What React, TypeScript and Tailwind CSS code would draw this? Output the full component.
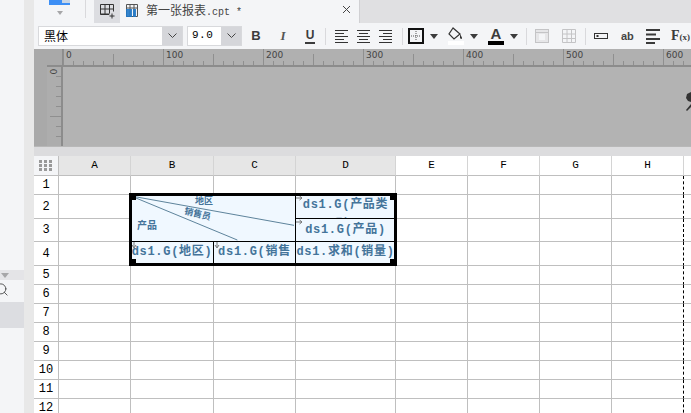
import { Search } from 'lucide-react';

const mono = { fontFamily: '"Liberation Mono", "Noto Sans CJK SC", monospace' };
const gridLine = 'border-r border-b border-[#bfbfbf]';
const cellText = 'text-[12px] font-bold text-[#44749a] tracking-[0.7px] leading-[20px] text-center overflow-hidden [line-break:anywhere]';

function Caret({ className = '' }: { className?: string }) {
    return (
        <svg width="8" height="5" viewBox="0 0 8 5" className={className}>
            <path d="M0 0h8L4 5z" fill="#3c3c3c" />
        </svg>
    );
}

function Divider() {
    return <div className="w-px h-[17px] bg-[#d9d9dc]" />;
}

function Lines({ mode }: { mode: 'left' | 'center' | 'right' }) {
    const short = mode === 'left' ? 'M1 4.5h9M1 10.5h9' : mode === 'right' ? 'M5 4.5h9M5 10.5h9' : 'M3 4.5h9M3 10.5h9';
    return (
        <svg width="15" height="14" viewBox="0 0 15 14" stroke="#333" strokeWidth="1">
            <path d={`M1 1.5h13M1 7.5h13M1 13.5h13 ${short}`} fill="none" />
        </svg>
    );
}

function Arrow({ down = false }: { down?: boolean }) {
    return (
        <svg width="7" height="7" viewBox="0 0 7 7" className="absolute left-0 top-0" fill="none" stroke="#777" strokeWidth="1">
            {down ? <path d="M3 0v5M1 3l2 3 2-3" /> : <path d="M0 3h6M3.5 1L6 3 3.5 5" />}
        </svg>
    );
}

function Ruler() {
    return (
        <div className="h-[97px] shrink-0 bg-[#a9a9a9] flex flex-col relative overflow-hidden">
            <div className="flex h-[16px] shrink-0">
                <div className="w-[29px] shrink-0 border-r border-[#8c8c8c]" />
                <div className="flex-1 flex bg-[#b0b0b0]">
                    {[0, 100, 200, 300, 400, 500, 600].map((n) => (
                        <div key={n} className="w-[100px] shrink-0 relative border-l border-[#8f8f8f] flex items-end">
                            <span className="absolute left-[2px] top-0 text-[9px] leading-[13px] text-[#444]" style={{ fontFamily: '"DejaVu Sans", sans-serif' }}>{n}</span>
                            {[...Array(9)].map((_, i) => (
                                <div key={i} className={`w-[10px] shrink-0 border-r border-[#8f8f8f] ${i === 4 ? 'h-[11px]' : 'h-[4px]'}`} />
                            ))}
                        </div>
                    ))}
                </div>
            </div>
            <div className="h-[2px] bg-[#8c8c8c] ml-[13px] shrink-0" />
            <div className="flex-1 flex">
                <div className="w-[13px] shrink-0" />
                <div className="w-[16px] shrink-0 bg-[#adadad] border-r-2 border-[#8c8c8c] flex flex-col items-end relative">
                    <span className="absolute left-[3px] top-[-1px] text-[9px] leading-[11px] text-[#444] rotate-90" style={{ fontFamily: '"DejaVu Sans", sans-serif' }}>0</span>
                    {[...Array(7)].map((_, i) => (
                        <div key={i} className={`h-[10px] shrink-0 border-b border-[#8f8f8f] ${i === 4 ? 'w-[11px]' : 'w-[5px]'}`} />
                    ))}
                </div>
                <div className="flex-1 bg-[#b3b3b3] flex items-start justify-end">
                    <svg width="5" height="19" viewBox="0 0 5 19" className="mt-[25px]" fill="#333">
                        <path d="M5 0 1 2 0 6l2 3 3 1zM5 12 0 18l1 1 4-4z" />
                    </svg>
                </div>
            </div>
        </div>
    );
}

function Toolbar() {
    return (
        <div className="h-[26px] bg-[#f4f5f7] flex items-center pl-[4px] shrink-0">
            <div className="w-[145px] h-[20px] bg-white border border-[#d8d9dc] flex items-center mb-[1px]">
                <span className="flex-1 pl-[5px] text-[12px] leading-[18px] text-black" style={{ fontFamily: '"Noto Sans CJK SC", sans-serif' }}>黑体</span>
                <div className="w-[20px] h-full bg-[#d5d6da] flex items-center justify-center">
                    <svg width="9" height="5" viewBox="0 0 9 5" fill="none" stroke="#444"><path d="M.5.5l4 4 4-4" /></svg>
                </div>
            </div>
            <div className="w-[55px] h-[20px] bg-white border border-[#d8d9dc] flex items-center ml-[4px] mb-[1px]">
                <span className="flex-1 pl-[4px] text-[11px] text-black tracking-[0.5px]" style={mono}>9.0</span>
                <div className="w-[20px] h-full bg-[#d5d6da] flex items-center justify-center">
                    <svg width="9" height="5" viewBox="0 0 9 5" fill="none" stroke="#444"><path d="M.5.5l4 4 4-4" /></svg>
                </div>
            </div>
            <span className="ml-[9px] w-[10px] text-[13px] font-bold text-[#3c3c3c] text-center" style={{ fontFamily: '"Liberation Sans", sans-serif' }}>B</span>
            <span className="ml-[17px] w-[10px] text-[13px] font-bold italic text-[#555] text-center" style={{ fontFamily: '"Liberation Serif", serif' }}>I</span>
            <span className="ml-[17px] w-[10px] text-[12px] leading-[13px] font-bold text-[#3c3c3c] text-center border-b-2 border-[#3c3c3c]" style={{ fontFamily: '"Liberation Sans", sans-serif' }}>U</span>
            <div className="ml-[10px]"><Divider /></div>
            <div className="ml-[8px]"><Lines mode="left" /></div>
            <div className="ml-[7px]"><Lines mode="center" /></div>
            <div className="ml-[7px]"><Lines mode="right" /></div>
            <div className="ml-[9px]"><Divider /></div>
            <svg width="16" height="16" viewBox="0 0 16 16" className="ml-[5px]" fill="none">
                <rect x="1" y="1" width="14" height="14" stroke="#111" strokeWidth="2" />
                <path d="M8 3v10M3 8h10" stroke="#555" strokeDasharray="1 1" />
            </svg>
            <Caret className="ml-[6px]" />
            <svg width="16" height="18" viewBox="0 0 16 18" className="ml-[10px]" fill="none">
                <path d="M5 1 1 7l5 5 6-5z" stroke="#333" strokeWidth="1.2" />
                <path d="M12 7c1 2 2 3 2 4s-1 1.500-2 0z" fill="#333" />
                <rect x="0" y="14" width="16" height="4" fill="#fff" />
            </svg>
            <Caret className="ml-[6px]" />
            <div className="ml-[10px] w-[16px] flex flex-col items-center">
                <span className="text-[15px] leading-[13px] font-bold text-[#3c3c3c]" style={{ fontFamily: '"Liberation Sans", sans-serif' }}>A</span>
                <div className="w-[16px] h-[4px] bg-black mt-px" />
            </div>
            <Caret className="ml-[6px]" />
            <div className="ml-[8px]"><Divider /></div>
            <svg width="14" height="14" viewBox="0 0 14 14" className="ml-[8px]" fill="none" stroke="#c4c4c6">
                <rect x=".5" y=".5" width="13" height="13" fill="#e6e6e8" />
                <path d="M.5 3.500h13" />
                <rect x="4" y="5" width="6" height="6" fill="#f4f5f7" stroke="none" />
            </svg>
            <svg width="14" height="14" viewBox="0 0 14 14" className="ml-[13px]" fill="none" stroke="#c4c4c6">
                <path d="M.5.5h13v13H.500zM5 .5v13M9.500.5v13M.5 5h13M.5 9.500h13" />
            </svg>
            <div className="ml-[9px]"><Divider /></div>
            <svg width="14" height="6" viewBox="0 0 14 6" className="ml-[8px]" fill="none" stroke="#333">
                <rect x=".5" y=".5" width="13" height="5" />
                <rect x="2.500" y="2" width="2" height="2" fill="#333" stroke="none" />
            </svg>
            <span className="ml-[13px] w-[12px] text-[11px] font-bold text-[#444] text-center" style={{ fontFamily: '"Liberation Sans", sans-serif' }}>ab</span>
            <svg width="14" height="15" viewBox="0 0 14 15" className="ml-[13px]" fill="#3a3a3a">
                <path d="M0 0h14v2H0zM0 4.500h10v2H0zM0 9h14v2H0zM0 13h9v2H0z" />
            </svg>
            <span className="ml-[11px] text-[14px] leading-[15px] font-bold text-[#3a3a3a]" style={{ fontFamily: '"Liberation Serif", serif' }}>F<span className="text-[9px]">(x)</span></span>
        </div>
    );
}

function TabBar() {
    return (
        <div className="h-[23px] flex shrink-0 bg-[#e0e0e2]">
            <div className="w-[326px] bg-[#f4f5f7] border-r border-[#d0d0d3] flex items-start shrink-0">
                <div className="w-[21px] ml-[15px] flex flex-col items-center">
                    <div className="w-[21px] h-[5px] bg-[#3d8ff5] flex justify-end"><div className="w-[8px] h-[3px] bg-[#c9d6e6]" /></div>
                    <svg width="6" height="4" viewBox="0 0 6 4" className="mt-[6px]"><path d="M0 0h6L3 4z" fill="#a6a6a8" /></svg>
                </div>
                <div className="w-px h-[18px] bg-[#d9d9dc] ml-[15px]" />
                <div className="ml-[8px] w-[26px] h-[23px] bg-[#dcdde1] flex items-center justify-center">
                    <svg width="15" height="15" viewBox="0 0 15 15" fill="none" stroke="#333">
                        <path d="M9 10.500H.5V.5h13v7M.5 5h13M.5 10h9M5 .5v10M9.500.5v9M12 9.500v5M9.500 12h5" />
                    </svg>
                </div>
                <svg width="12" height="13" viewBox="0 0 12 13" className="ml-[6px] mt-[4px]" fill="none">
                    <path d="M.5.5h11v12H.500zM.5 4h11M4 .5v12M8 .5v12" stroke="#555" />
                    <path d="M0 5h6v8H0zM7 5h3v8H7z" fill="#1f78c8" opacity=".9" />
                </svg>
                <span className="ml-[8px] mt-[1px] text-[12px] leading-[18px] text-[#444] whitespace-nowrap" style={{ fontFamily: '"Noto Sans CJK SC", sans-serif' }}>
                    第一张报表<span style={mono} className="text-[10px]">.cpt *</span>
                </span>
                <svg width="9" height="9" viewBox="0 0 9 9" className="ml-auto mr-[8px] mt-[5px]" fill="none" stroke="#444"><path d="M1 1l7 7M8 1L1 8" /></svg>
            </div>
        </div>
    );
}

const colWidths = 'grid-cols-[25px_72px_83px_82px_100px_72px_72px_72px_72px_7px]';
const rowHeights = 'grid-rows-[20px_19px_24px_23px_24px_repeat(8,19px)]';

function Blank({ breakLine = false }: { breakLine?: boolean }) {
    return <div className={breakLine ? 'border-b border-[#bfbfbf] border-r border-r-black border-dashed [border-bottom-style:solid]' : gridLine} />;
}

function RowNum({ n }: { n: number }) {
    return (
        <div className={`bg-white flex items-center justify-center text-[12px] text-black ${gridLine}`} style={mono}>{n}</div>
    );
}

function TrailingBlanks() {
    return (
        <>
            <Blank />
            <Blank />
            <Blank />
            <Blank breakLine />
            <div className="border-b border-[#bfbfbf]" />
        </>
    );
}

function Sheet() {
    return (
        <div className={`grid ${colWidths} ${rowHeights} relative bg-white shrink-0`} style={mono}>
            <div className="bg-[#f4f5f7] border-r border-b border-[#bfbfbf] grid grid-cols-3 gap-[1px] px-[5px] content-center">
                {[...Array(9)].map((_, i) => (
                    <div key={i} className="w-[3px] h-[3px] bg-[#999]" />
                ))}
            </div>
            {['A', 'B', 'C', 'D', 'E', 'F', 'G', 'H'].map((c, i) => (
                <div
                    key={c}
                    className={`flex items-center justify-center text-[11px] text-black border-b border-[#bfbfbf] border-r border-r-[#d4d4d4] ${i < 4 ? 'bg-[#e6e6e6]' : 'bg-white'}`}
                >
                    {c}
                </div>
            ))}
            <div className="border-b border-[#bfbfbf]" />

            <RowNum n={1} />
            <Blank />
            <Blank />
            <Blank />
            <Blank />
            <TrailingBlanks />

            <RowNum n={2} />
            <Blank />
            <div className="col-span-2 row-span-2 bg-[#f0f8ff] relative border-r border-b border-black">
                <svg className="absolute inset-0 w-full h-full" viewBox="0 0 165 47" preserveAspectRatio="none" fill="none" stroke="#5a8199">
                    <path d="M0 1 164 31M0 1 107 46" />
                </svg>
                <span className="absolute left-[64px] top-0 text-[9px] leading-[12px] font-bold text-[#44749a]" style={{ fontFamily: '"Noto Sans CJK SC", sans-serif' }}>地区</span>
                <span className="absolute left-[53px] top-[13px] text-[9px] leading-[12px] font-bold text-[#44749a] rotate-[14deg]" style={{ fontFamily: '"Noto Sans CJK SC", sans-serif' }}>销售员</span>
                <span className="absolute left-[6px] top-[24px] text-[10px] leading-[12px] font-bold text-[#44749a]" style={{ fontFamily: '"Noto Sans CJK SC", sans-serif' }}>产品</span>
            </div>
            <div className={`relative bg-[#f0f8ff] border-r border-b border-black px-[1px] ${cellText}`}>
                <Arrow />
                ds1.G(产品类型)
            </div>
            <TrailingBlanks />

            <RowNum n={3} />
            <Blank />
            <div className={`relative bg-[#f0f8ff] border-r border-b border-black ${cellText} leading-[22px]`}>
                <Arrow />
                ds1.G(产品)
            </div>
            <TrailingBlanks />

            <RowNum n={4} />
            <Blank />
            <div className={`relative bg-[#f0f8ff] border-r border-b border-black ${cellText}`}>
                <Arrow down />
                ds1.G(地区)
            </div>
            <div className={`relative bg-[#f0f8ff] border-r border-b border-black ${cellText}`}>
                <Arrow down />
                ds1.G(销售员)
            </div>
            <div className={`bg-[#f0f8ff] border-r border-b border-black ${cellText}`}>ds1.求和(销量)</div>
            <TrailingBlanks />

            {[5, 6, 7, 8, 9, 10, 11, 12].map((n) => (
                <div key={n} className="contents">
                    <RowNum n={n} />
                    <Blank />
                    <Blank />
                    <Blank />
                    <Blank />
                    <TrailingBlanks />
                </div>
            ))}

            {/* selection border over B2:D4 */}
            <div className="col-start-3 col-span-3 row-start-3 row-span-3 absolute -left-[2px] -top-[2px] -right-[1px] bottom-0 border-[3px] border-black pointer-events-none">
                <div className="absolute -left-[1px] -top-[1px] w-[5px] h-[5px] bg-black" />
                <div className="absolute -right-[1px] -top-[1px] w-[5px] h-[5px] bg-black" />
                <div className="absolute -left-[1px] -bottom-[1px] w-[5px] h-[5px] bg-black" />
                <div className="absolute -right-[1px] -bottom-[1px] w-[5px] h-[5px] bg-black" />
            </div>
        </div>
    );
}

export default function App() {
    return (
        <div className="w-[691px] h-[413px] overflow-hidden flex bg-white">
            <div className="w-[24px] shrink-0 bg-[#f4f5f7] flex flex-col overflow-hidden">
                <div className="h-[270px] shrink-0" />
                <div className="h-[10px] bg-[#e4e4e7] flex items-center pl-[1px] shrink-0">
                    <svg width="8" height="5" viewBox="0 0 8 5"><path d="M0 0h8L4 5z" fill="#a6a6a8" /></svg>
                </div>
                <Search size={15} strokeWidth={1.4} className="text-[#444] -ml-[6px] mt-[2px] shrink-0" />
                <div className="h-[5px] shrink-0" />
                <div className="h-[26px] bg-[#dcdde1] shrink-0" />
            </div>
            <div className="w-[10px] shrink-0 bg-[#e8e8e8]" />
            <div className="flex-1 min-w-0 flex flex-col">
                <TabBar />
                <Toolbar />
                <Ruler />
                <div className="h-[10px] bg-[#dcdcde] border-t border-[#b8b8b8] shrink-0" />
                <Sheet />
            </div>
        </div>
    );
}
